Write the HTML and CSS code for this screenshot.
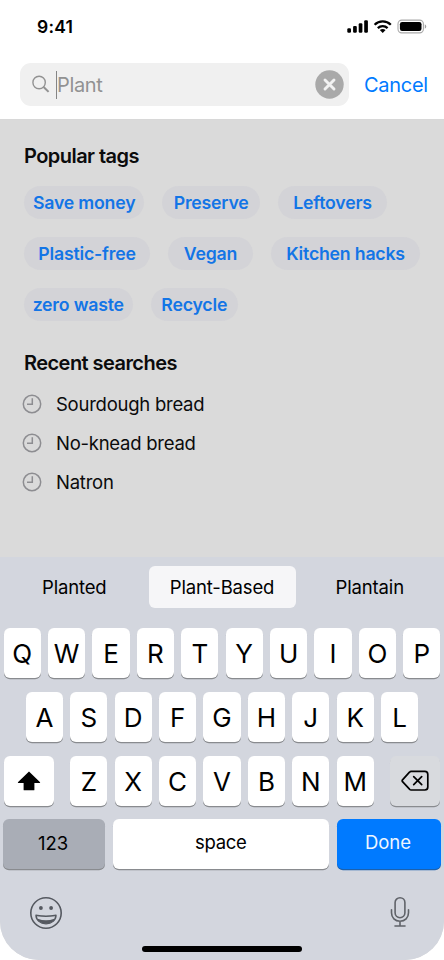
FILE: index.html
```html
<!DOCTYPE html>
<html lang="en">
<head>
<meta charset="utf-8">
<title>Search</title>
<link rel="stylesheet" href="styles.css">
</head>
<body>
<div class="phone">
  <header class="top">
    <div class="status">
      <span class="time">9:41</span>
      <svg class="status-icons" width="80" height="16" viewBox="0 0 80 16">
        <rect x="0.3" y="9.2" width="3.7" height="4.6" rx="1.2"/>
        <rect x="6.1" y="6.9" width="3.7" height="6.9" rx="1.2"/>
        <rect x="11.7" y="4.2" width="3.7" height="9.6" rx="1.2"/>
        <rect x="17.2" y="1.2" width="3.7" height="12.6" rx="1.2"/>
        <g fill="none" stroke="#000" stroke-width="2.3">
          <path d="M27.6 5.7a11.6 11.6 0 0 1 16.2 0"/>
          <path d="M30.8 9.1a7.1 7.1 0 0 1 9.8 0"/>
        </g>
        <path d="M35.7 14l-2.900-2.900a4.500 4.500 0 0 1 5.800 0z"/>
        <rect x="51" y="1.100" width="25.400" height="12.800" rx="3.800" fill="none" stroke="#a9a9a9" stroke-width="1.100"/>
        <rect x="52.900" y="3" width="21.600" height="9" rx="2.200"/>
        <path d="M77.800 5.300v4.400c2-.8 2-3.600 0-4.400z" fill="#a0a0a0"/>
      </svg>
    </div>
    <div class="search-row">
      <div class="field">
        <svg class="lens" width="19" height="19" viewBox="0 0 19 19" fill="none" stroke="#929292">
          <circle cx="7.1" cy="7.500" r="6.200" stroke-width="1.400"/>
          <path d="M11.600 12l5 4.900" stroke-width="2"/>
        </svg>
        <span class="caret"></span>
        <span class="query">Plant</span>
        <svg class="clear" width="29" height="29" viewBox="0 0 29 29">
          <circle cx="14.500" cy="14.500" r="14.200" fill="#a9a9a9"/>
          <path d="M10 10l9 9M19 10l-9 9" stroke="#f2f2f2" stroke-width="2.900" stroke-linecap="round"/>
        </svg>
      </div>
      <span class="cancel">Cancel</span>
    </div>
  </header>

  <main class="content">
    <h2 class="title popular">Popular tags</h2>
    <div class="tags">
      <div class="tag-row"><span class="tag save">Save money</span><span class="tag preserve">Preserve</span><span class="tag leftovers">Leftovers</span></div>
      <div class="tag-row"><span class="tag plastic">Plastic-free</span><span class="tag vegan">Vegan</span><span class="tag kitchen">Kitchen hacks</span></div>
      <div class="tag-row"><span class="tag zero">zero waste</span><span class="tag recycle">Recycle</span></div>
    </div>
    <h2 class="title recent">Recent searches</h2>
    <ul class="history">
      <li><svg width="20" height="20" viewBox="0 0 20 20"><circle cx="10" cy="10" r="8.7"/><path d="M10.3 4.200v6.100H5"/></svg><span>Sourdough bread</span></li>
      <li><svg width="20" height="20" viewBox="0 0 20 20"><circle cx="10" cy="10" r="8.7"/><path d="M10.3 4.200v6.100H5"/></svg><span>No-knead bread</span></li>
      <li><svg width="20" height="20" viewBox="0 0 20 20"><circle cx="10" cy="10" r="8.7"/><path d="M10.3 4.200v6.100H5"/></svg><span>Natron</span></li>
    </ul>
  </main>

  <section class="keyboard">
    <div class="suggestions"><span>Planted</span><span class="active">Plant-Based</span><span>Plantain</span></div>
    <div class="keys"><span class="key">Q</span><span class="key">W</span><span class="key">E</span><span class="key">R</span><span class="key">T</span><span class="key">Y</span><span class="key">U</span><span class="key">I</span><span class="key">O</span><span class="key">P</span></div>
    <div class="keys"><span class="key">A</span><span class="key">S</span><span class="key">D</span><span class="key">F</span><span class="key">G</span><span class="key">H</span><span class="key">J</span><span class="key">K</span><span class="key">L</span></div>
    <div class="keys">
      <span class="key shift"><svg width="24" height="20" viewBox="0 0 24 20"><path d="M12 .5L.9 11.200q-.3.7.5.800h5.200v6.700q0 .6.600.6h9.600q.6 0 .6-.6V12h5.200q.8-.1.500-.8z"/></svg></span>
      <span class="key">Z</span><span class="key">X</span><span class="key">C</span><span class="key">V</span><span class="key">B</span><span class="key">N</span><span class="key">M</span>
      <span class="key delete"><svg width="28" height="22" viewBox="0 0 28 22" fill="none" stroke="#000" stroke-width="1.700" stroke-linejoin="round" stroke-linecap="round"><path d="M10.200 1.400h13.600q3 0 3 3v12.600q0 3-3 3H10.200q-1 0-1.700-.8L1.500 11.700q-.7-1 0-1.900L8.500 2.200q.7-.8 1.700-.8z"/><path d="M12.700 6.700l8 8M20.700 6.700l-8 8"/></svg></span>
    </div>
    <div class="bottom-keys"><span class="wide num">123</span><span class="wide space">space</span><span class="wide done">Done</span></div>
    <div class="tools">
      <svg width="34" height="34" viewBox="0 0 34 34">
        <circle cx="17" cy="17" r="15.200" fill="none" stroke="#555960" stroke-width="1.600"/>
        <circle cx="11.900" cy="12" r="1.900" fill="#555960"/><circle cx="22.100" cy="12" r="1.900" fill="#555960"/>
        <path d="M6.900 19.100q10.100 2 20.200 0c.2 5.200-4.500 8.700-10.100 8.700S6.700 24.300 6.900 19.100z" fill="#555960" stroke="#555960" stroke-width="1.200" stroke-linejoin="round"/>
        <path d="M7.900 20.300q9.100 1.500 18.200 0l-.8 2.400q-8.300 3.200-16.600 0z" fill="#d3d6de"/>
      </svg>
      <svg width="20" height="32" viewBox="0 0 20 32" fill="none" stroke="#606369" stroke-width="1.600" stroke-linecap="round">
        <rect x="5.100" y="1.700" width="9.800" height="20" rx="4.900"/>
        <path d="M1.500 13.700v3.100c0 5 3.500 8.500 8.500 8.500s8.500-3.500 8.500-8.500v-3.100M10 25.300v4.700M5 30h10"/>
      </svg>
    </div>
    <div class="home"></div>
  </section>
</div>
</body>
</html>
```
FILE: styles.css
```css
* { box-sizing: border-box; }
body { margin: 0; background: #fff; font-family: Inter, "Liberation Sans", sans-serif; color: #0b0b0c; }
.phone { width: 444px; height: 960px; overflow: hidden; border-radius: 0 0 39px 39px; display: flex; flex-direction: column; background: #dadada; }
svg { display: block; flex: none; }

.top { height: 120px; background: #fff; border-bottom: 1px solid #d8d8d8; }
.status { height: 63px; padding: 19px 17px 0 37px; display: flex; justify-content: space-between; align-items: flex-start; }
.time { font-size: 17.500px; line-height: 16px; font-weight: 600; color: #000; letter-spacing: .25px; }
.search-row { display: flex; align-items: center; padding-left: 20px; gap: 15px; }
.field { width: 329px; height: 43px; border-radius: 11px; background: #f0f0f0; display: flex; align-items: center; padding: 0 5.500px 0 12px; color: #929292; }
.caret { width: 1px; height: 28px; margin-left: 5px; background: #858585; }
.query { flex: 1; font-size: 20px; line-height: 28px; letter-spacing: -.35px; }
.cancel { font-size: 20px; color: #007aff; letter-spacing: -.3px; }

.content { height: 437px; padding: 22px 24px 0; }
.title { margin: 0; font-size: 20px; line-height: 28px; font-weight: 600; letter-spacing: -.55px; }
.tags { display: grid; gap: 18px; margin-top: 16px; }
.tag-row { display: flex; gap: 18px; }
.tag { height: 33px; border-radius: 17px; background: #d3d3d7; color: #1375e6; font-size: 17.700px; line-height: 33px; font-weight: 600; text-align: center; white-space: nowrap; letter-spacing: -.2px; }
.save { width: 120.300px; }
.preserve { width: 97.700px; }
.leftovers { width: 109px; }
.plastic { width: 126px; }
.vegan { width: 85px; }
.kitchen { width: 149px; }
.zero { width: 108.500px; }
.recycle { width: 87.500px; }
.recent { margin-top: 28px; }
.history { list-style: none; margin: 7px 0 0 -2px; padding: 0; }
.history li { height: 39px; display: flex; align-items: center; gap: 14px; font-size: 18.500px; letter-spacing: -.25px; }
.history svg { fill: none; stroke: #8d8d91; stroke-width: 1.500; }

.keyboard { height: 403px; background: #d3d6de; color: #000; }
.suggestions { height: 71px; padding-top: 9px; display: grid; grid-template-columns: 1fr 147px 1fr; font-size: 18.500px; text-align: center; line-height: 42px; letter-spacing: -.15px; }
.suggestions span { height: 42px; }
.suggestions .active { background: #f6f6f8; border-radius: 6px; }
.keys { display: flex; justify-content: center; gap: 7.100px; height: 64px; }
.key { width: 37.300px; height: 49.500px; border-radius: 6px; background: #fff; box-shadow: 0 1.200px 0 #898b8f; display: flex; align-items: center; justify-content: center; font-size: 26px; padding-top: 2px; }
.shift { width: 49.700px; margin-right: 9.200px; padding: 0; }
.delete { width: 49.700px; margin-left: 9.200px; padding: 0; background: #d8dade; }
.bottom-keys { display: flex; padding: 0 3.500px 0 3px; justify-content: space-between; margin-top: -1px; }
.wide { height: 49.500px; border-radius: 6px; line-height: 47px; text-align: center; font-size: 18.500px; box-shadow: 0 1.200px 0 #898b8f; background: #fff; letter-spacing: -.3px; }
.num { width: 102px; background: #a9adb6; line-height: 49px; letter-spacing: 0; padding-right: 2px; }
.space { width: 216px; }
.done { width: 104px; background: #007aff; color: #eef6ff; box-shadow: 0 1.200px 0 #1b61ae; letter-spacing: 0; padding-right: 1px; }
.tools { display: flex; justify-content: space-between; padding: 27px 34.500px 0 28.700px; height: 77.500px; }
.home { width: 160px; height: 6px; border-radius: 3px; background: #000; margin: 0 auto; }
```
